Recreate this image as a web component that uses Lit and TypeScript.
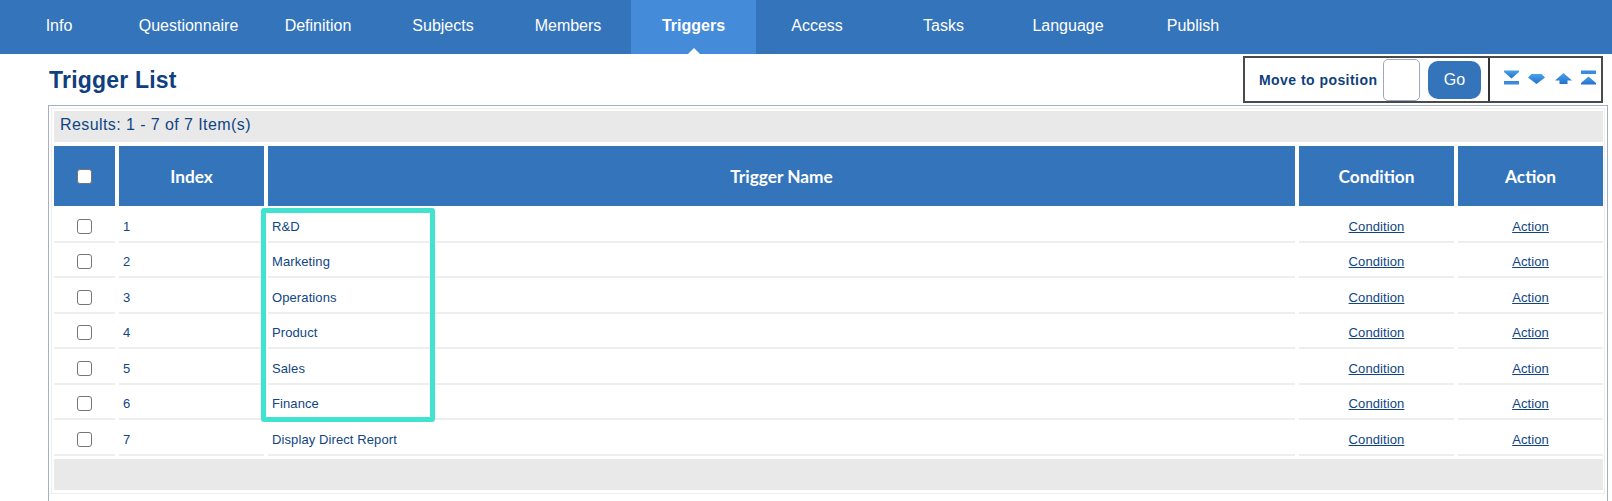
import { LitElement, html, css, svg } from "lit";
import { customElement } from "lit/decorators.js";

const TABS = ["Info", "Questionnaire", "Definition", "Subjects", "Members", "Triggers", "Access", "Tasks", "Language", "Publish"];
const ROWS = ["R&D", "Marketing", "Operations", "Product", "Sales", "Finance", "Display Direct Report"];

const grad = (id: string) => svg`
  <linearGradient id=${id} x1="0" y1="0" x2="0" y2="1">
    <stop offset="0" stop-color="#4aa2ec" />
    <stop offset="1" stop-color="#2270cc" />
  </linearGradient>`;

@customElement("app-root")
export class AppRoot extends LitElement {
  static styles = css`
    :host { display: block; width: 1612px; height: 501px; overflow: hidden; background: #fff; font-family: "Liberation Sans", Arial, sans-serif; color: #0f4583; }
    .nav { display: grid; grid-template-columns: 118px 141px 118px 128px 126px 125px 122px 131px 118px 132px; height: 54px; background: #3474bb; }
    .tab { position: relative; display: flex; align-items: center; justify-content: center; color: #fff; font-size: 16px; padding-bottom: 3px; box-sizing: border-box; }
    .tab:nth-child(4) { padding-left: 4px; }
    .tab.on { background: #448bda; font-weight: 700; }
    .tab.on::after { content: ""; position: absolute; left: 50%; bottom: 0; margin-left: -6px; border: 6px solid transparent; border-top: 0; border-bottom-color: #fff; }
    .head { display: flex; justify-content: space-between; align-items: flex-start; padding: 2px 9px 0 49px; height: 51px; box-sizing: border-box; }
    h1 { margin: 10px 0 0; font-size: 23px; line-height: 28px; font-weight: 700; color: #0f3f7d; letter-spacing: .2px; }
    .tools { display: flex; width: 360px; height: 47px; box-sizing: border-box; border: 2px solid #4a4a4a; }
    .move { display: flex; align-items: center; width: 245px; flex: none; box-sizing: border-box; padding-left: 14px; border-right: 2px solid #333; }
    .move b { flex: none; font-size: 14px; letter-spacing: .45px; color: #0f3f7d; width: 124px; }
    .box { flex: none; width: 37px; height: 42px; box-sizing: border-box; border: 1px solid #9aa9c0; border-radius: 5px; }
    .go { flex: none; margin-left: 8px; width: 53px; height: 38px; border-radius: 10px; background: #3474bb; color: #fff; font-size: 16px; display: flex; align-items: center; justify-content: center; }
    .arrows { flex: 1; display: flex; align-items: center; justify-content: space-between; padding: 0 5px 4px 14px; }
    .arrows svg { display: block; }
    .panel { margin: 0 4px 0 48px; height: 396px; box-sizing: border-box; border: 1px solid #a3afc2; border-bottom: 0; padding: 2px; }
    .inner { position: relative; height: 386px; box-sizing: border-box; border: 1px solid #eee; padding: 2px 0 0 2px; width: 1554px; }
    .bar { height: 31px; background: #e9e9e9; width: 1549px; }
    .results { font-size: 16px; line-height: 27px; padding-left: 6px; box-sizing: border-box; letter-spacing: .42px; }
    table { border-collapse: separate; border-spacing: 4px 0; margin: 4px 0 3px -4px; width: 1557px; table-layout: fixed; }
    th { background: #3474bb; color: #fff; height: 61px; box-sizing: border-box; border-bottom: 1px solid #fff; background-clip: padding-box; padding: 0; font-family: Lato, sans-serif; font-size: 17.3px; font-weight: 700; }
    td { height: 35.5px; box-sizing: border-box; padding: 5px 0 0; font-size: 13px; letter-spacing: .1px; border-bottom: 2px solid #eee; }
    .w-cb { width: 61px; }
    .w-idx { width: 145px; }
    .w-cond { width: 155px; }
    .w-act { width: 145px; }
    input { appearance: none; box-sizing: border-box; width: 15px; height: 15px; display: block; margin: 0 auto; background: #fff; border: 1.5px solid #767676; border-radius: 3px; }
    .idx, .name { padding-left: 4px; }
    td.lnk { text-align: center; }
    a { color: #0f4583; text-decoration: underline; }
    .mark { position: absolute; left: 209px; top: 99px; width: 174px; height: 214px; box-sizing: border-box; border: 5px solid #42e2d1; border-radius: 3px; pointer-events: none; }
  `;

  render() {
    return html`
      <div class="nav">${TABS.map((t) => html`<div class="tab ${t === "Triggers" ? "on" : ""}">${t}</div>`)}</div>
      <div class="head">
        <h1>Trigger List</h1>
        <div class="tools">
          <div class="move"><b>Move to position</b><div class="box"></div><div class="go">Go</div></div>
          <div class="arrows">
            <svg width="15" height="15" viewBox="0 0 15 15"><defs>${grad("a1")}</defs><path d="M0 0.5H15V2L7.5 8.5L0 2Z" fill="url(#a1)"/><rect x="0" y="11" width="15" height="3.5" fill="#3a8ae0"/></svg>
            <svg width="17" height="15" viewBox="0 0 17 15"><defs>${grad("a2")}</defs><path d="M3.5 4H13.5L17 7.5L8.5 14L0 7.5Z" fill="url(#a2)"/></svg>
            <svg width="17" height="15" viewBox="0 0 17 15"><defs>${grad("a3")}</defs><path d="M8.5 3L17 10.5H12.5V14H4.5V10.5H0Z" fill="url(#a3)"/></svg>
            <svg width="15" height="15" viewBox="0 0 15 15"><defs>${grad("a4")}</defs><rect x="0" y="0.5" width="15" height="3.5" fill="#3a8ae0"/><path d="M7.5 6.5L15 13V14.5H0V13Z" fill="url(#a4)"/></svg>
          </div>
        </div>
      </div>
      <div class="panel"><div class="inner">
        <div class="bar results">Results: 1 - 7 of 7 Item(s)</div>
        <table>
          <colgroup><col class="w-cb"/><col class="w-idx"/><col/><col class="w-cond"/><col class="w-act"/></colgroup>
          <thead><tr><th><input type="checkbox" /></th><th>Index</th><th>Trigger Name</th><th>Condition</th><th>Action</th></tr></thead>
          <tbody>
            ${ROWS.map((r, i) => html`<tr>
              <td><input type="checkbox" /></td>
              <td class="idx">${i + 1}</td>
              <td class="name">${r}</td>
              <td class="lnk"><a>Condition</a></td>
              <td class="lnk"><a>Action</a></td>
            </tr>`)}
          </tbody>
        </table>
        <div class="bar"></div>
        <div class="mark"></div>
      </div></div>
    `;
  }
}
